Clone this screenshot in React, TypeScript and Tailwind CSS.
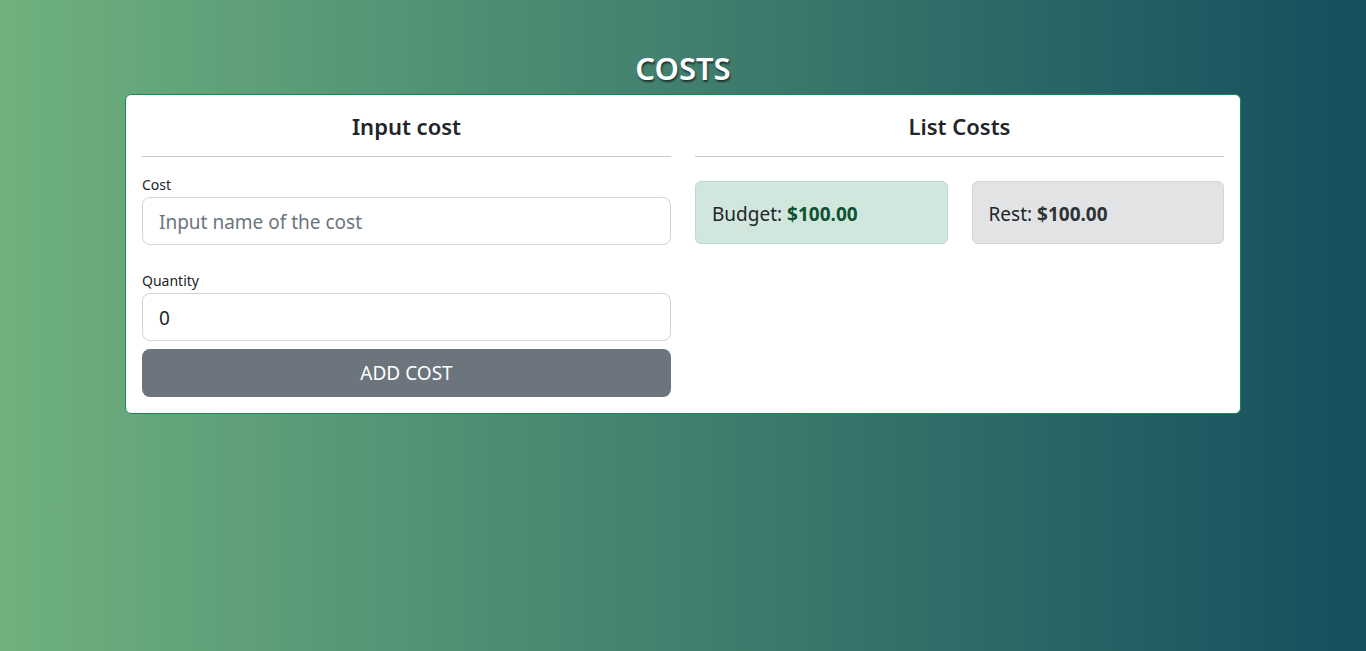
import { useState } from "react";

const font = { fontFamily: '"Noto Sans", "Open Sans", Arial, sans-serif' };

function Alert({ label, value, tone }: { label: string; value: string; tone: "success" | "secondary" }) {
	const cls =
		tone === "success"
			? "bg-[#d1e7dd] border-[#badbcc] text-[#0f5132]"
			: "bg-[#e2e3e5] border-[#d3d6d8] text-[#2f3336]";
	return (
		<div className={`border rounded-md px-4 pt-[18px] pb-[14px] text-[19px] leading-[29px] ${cls}`}>
			<span className="text-[#212529]">{label}: </span>
			<b className="font-bold">{value}</b>
		</div>
	);
}

export default function App() {
	const [name, setName] = useState("");
	const [qty, setQty] = useState("0");

	return (
		<div
			className="min-h-[651px] w-full bg-gradient-to-r from-[#70b17e] via-[#427f6e] to-[#154e5d] pt-[49px]"
			style={font}
		>
			<h1 className="text-center text-white text-[31px] leading-[38px] font-semibold mb-[7px] [text-shadow:1px_2px_2px_rgba(0,0,0,0.6)]">
				COSTS
			</h1>

			<div className="mx-auto w-[1116px] bg-white border border-[#198754] rounded-md p-4">
				<div className="grid grid-cols-2 gap-x-6">
					<div>
						<h4 className="text-center text-[22px] leading-[29px] font-semibold text-[#212529] pt-px">
							Input cost
						</h4>
						<hr className="mt-[15px] mb-[16px] border-t border-[#c9c9c9]" />

						<label className="block text-[14px] leading-[24px] text-[#212529]">Cost</label>
						<input
							value={name}
							onChange={(e) => setName(e.target.value)}
							placeholder="Input name of the cost"
							className="w-full h-12 rounded-lg border border-[#ced4da] px-4 pt-[2px] text-[19px] text-[#212529] placeholder:text-[#6c757d] outline-none"
						/>

						<label className="block mt-[24px] text-[14px] leading-[24px] text-[#212529]">Quantity</label>
						<input
							value={qty}
							onChange={(e) => setQty(e.target.value)}
							className="w-full h-12 rounded-lg border border-[#ced4da] px-4 pt-[2px] text-[19px] text-[#212529] outline-none"
						/>

						<button className="mt-2 w-full h-12 rounded-lg bg-[#6c757d] text-white text-[19px]">
							ADD COST
						</button>
					</div>

					<div>
						<h4 className="text-center text-[22px] leading-[29px] font-semibold text-[#212529] pt-px">
							List Costs
						</h4>
						<hr className="mt-[15px] mb-[24px] border-t border-[#c9c9c9]" />

						<div className="grid grid-cols-2 gap-x-6">
							<Alert label="Budget" value="$100.00" tone="success" />
							<Alert label="Rest" value="$100.00" tone="secondary" />
						</div>
					</div>
				</div>
			</div>
		</div>
	);
}
